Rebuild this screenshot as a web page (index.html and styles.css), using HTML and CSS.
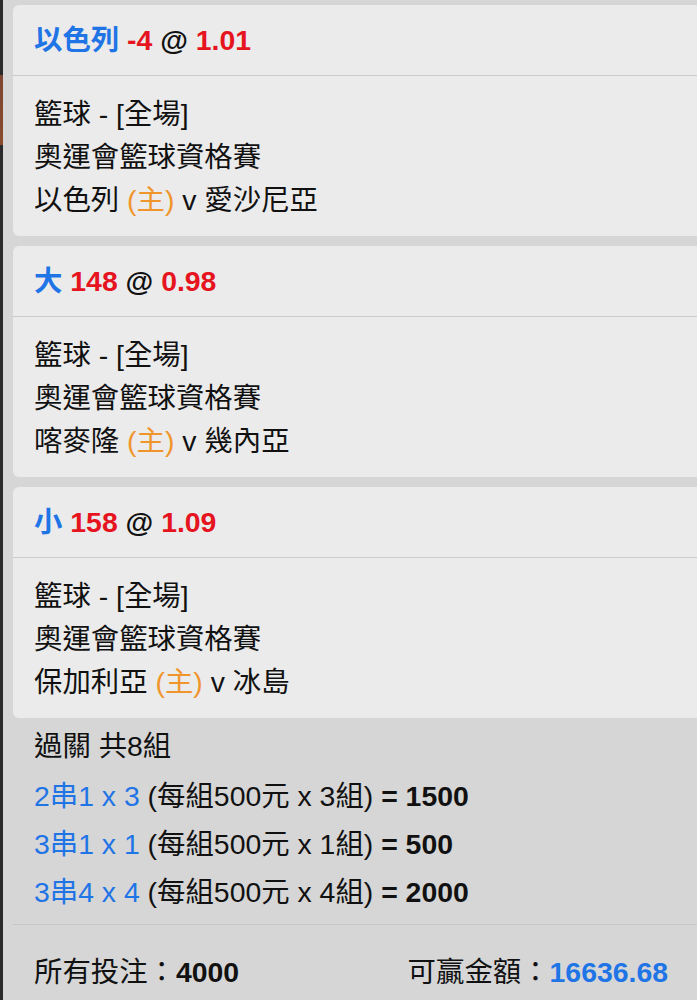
FILE: index.html
```html
<!DOCTYPE html>
<html lang="zh-Hant">
<head>
    <meta charset="UTF-8">
    <meta name="viewport" content="width=device-width, initial-scale=1.0">
    <title>過關投注</title>
    <link rel="stylesheet" href="styles.css">
</head>
<body>
    <div class="sheet">
        <div class="bet-card">
            <div class="bet-head">
                <span class="pick">以色列</span> <span class="odds">-4</span> @ <span class="odds">1.01</span>
            </div>
            <div class="bet-body">
                <div>籃球 - [全場]</div>
                <div>奧運會籃球資格賽</div>
                <div>以色列 <span class="home">(主)</span> v 愛沙尼亞</div>
            </div>
        </div>
        <div class="bet-card">
            <div class="bet-head">
                <span class="pick">大</span> <span class="odds">148</span> @ <span class="odds">0.98</span>
            </div>
            <div class="bet-body">
                <div>籃球 - [全場]</div>
                <div>奧運會籃球資格賽</div>
                <div>喀麥隆 <span class="home">(主)</span> v 幾內亞</div>
            </div>
        </div>
        <div class="bet-card">
            <div class="bet-head">
                <span class="pick">小</span> <span class="odds">158</span> @ <span class="odds">1.09</span>
            </div>
            <div class="bet-body">
                <div>籃球 - [全場]</div>
                <div>奧運會籃球資格賽</div>
                <div>保加利亞 <span class="home">(主)</span> v 冰島</div>
            </div>
        </div>

        <div class="combo">
            <div class="combo-title">過關 共8組</div>
            <div><span class="combo-type">2串1 x 3</span> (每組500元 x 3組) <b>= 1500</b></div>
            <div><span class="combo-type">3串1 x 1</span> (每組500元 x 1組) <b>= 500</b></div>
            <div><span class="combo-type">3串4 x 4</span> (每組500元 x 4組) <b>= 2000</b></div>
        </div>

        <div class="totals">
            <div>所有投注：<b>4000</b></div>
            <div>可贏金額：<b class="win">16636.68</b></div>
        </div>
    </div>
</body>
</html>
```

FILE: styles.css
```css
body {
    margin: 0;
    font-family: "Liberation Sans", "Noto Sans CJK TC", sans-serif;
    font-size: 28.4px;
    color: #111;
    background: linear-gradient(to bottom, #2a2a2a 0, #2a2a2a 75px, #7d4630 75px, #8a4a2c 145px, #2a2a2a 145px);
    overflow: hidden;
}
.sheet {
    margin-left: 3px;
    background: #d6d6d6;
    padding: 5px 0 0 10px;
    min-height: 1000px;
}
.bet-card {
    background: #ebebeb;
    border-radius: 6px 0 0 6px;
    margin-bottom: 10px;
}
.bet-head {
    height: 70px;
    line-height: 70px;
    padding-left: 21px;
    font-weight: bold;
    border-bottom: 1px solid #cbcbcb;
}
.pick {
    color: #1f74e6;
}
.odds {
    color: #e5141e;
}
.bet-body {
    padding: 17px 21px 14px;
    line-height: 43px;
}
.home {
    color: #f0952c;
}
.combo {
    margin-top: -10px;
    padding: 4px 21px 8px;
    line-height: 48px;
    border-bottom: 1px solid #c6c6c6;
}
.combo-title {
    margin-bottom: 2px;
}
.combo-type {
    color: #1f74e6;
}
.totals {
    display: flex;
    justify-content: space-between;
    padding: 23px 29px 0 21px;
    line-height: 48px;
}
.win {
    color: #1f74e6;
}
```
